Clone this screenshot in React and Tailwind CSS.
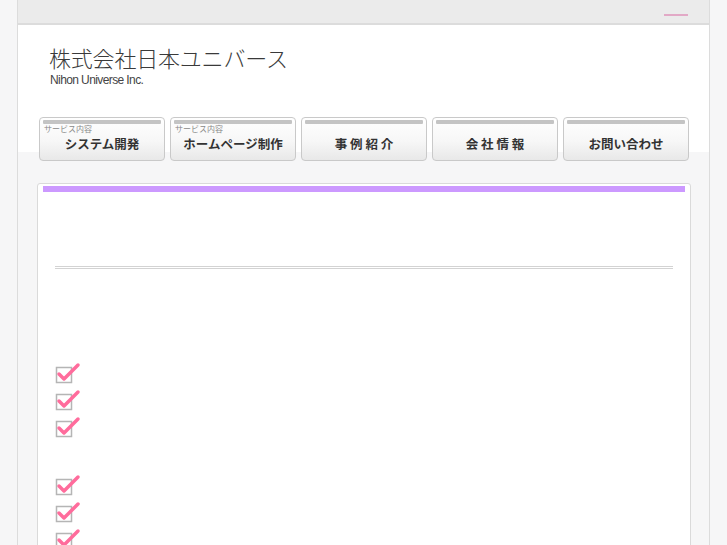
import React from "react";

const navItems = [
  { label: "システム開発", sub: "サービス内容" },
  { label: "ホームページ制作", sub: "サービス内容" },
  { label: "事 例 紹 介" },
  { label: "会 社 情 報" },
  { label: "お問い合わせ" },
];

const CheckMark = () => (
  <svg width="26" height="22" viewBox="0 0 26 22" className="block">
    <rect x="1.5" y="5.5" width="15" height="15" fill="#fff" stroke="#b5b5b5" strokeWidth="1.5" />
    <path d="M4 12 L9 17 L23 3" fill="none" stroke="#ff6c9c" strokeWidth="3.5" strokeLinecap="round" strokeLinejoin="round" />
  </svg>
);

const NavButton = ({ label, sub }) => (
  <div className="relative w-[126px] h-[44px] rounded-[4px] border border-[#c9c9c9] bg-[linear-gradient(to_bottom,#ffffff_0%,#f7f7f7_55%,#e8e8e8_100%)] px-[3px] pt-[2px]">
    <div className="h-[4px] bg-[#c4c4c4] rounded-[1px]" />
    {sub && (
      <div className="absolute left-[4px] top-[6px] text-[8px] leading-[9px] text-[#888]">{sub}</div>
    )}
    <div className="flex items-center justify-center h-[34px] pt-[4px] text-[12.5px] leading-[15px] font-bold text-[#333]">
      {label}
    </div>
  </div>
);

export default function App() {
  const groups = [[0, 1, 2], [3, 4, 5]];

  return (
    <div
      className="min-h-screen bg-[#f6f6f7] pl-[17px]"
      style={{ fontFamily: '"Noto Sans CJK JP", "Liberation Sans", sans-serif' }}
    >
      <div className="w-[693px] min-h-[545px] border-x border-[#dcdcdc]">
        {/* top band */}
        <div className="h-[25px] bg-[#ebebeb] border-b-2 border-[#dcdcdc] flex justify-end pr-[21px] pt-[14px]">
          <div className="w-[24px] h-[2px] bg-[#e2a9c6]" />
        </div>

        {/* logo */}
        <div className="bg-white h-[92px] pl-[31px] pt-[17px]">
          <div className="text-[22px] font-light leading-[30px] text-[#3a3a3a] tracking-[-0.2px]">株式会社日本ユニバース</div>
          <div
            className="text-[12px] leading-[14px] text-[#444] tracking-[-0.6px] mt-[1px] pl-[1px]"
            style={{ fontFamily: '"Liberation Sans", sans-serif' }}
          >
            Nihon Universe Inc.
          </div>
        </div>

        {/* nav */}
        <div className="flex gap-[5px] pl-[21px] h-[43px] bg-[linear-gradient(to_bottom,#ffffff_35px,#f6f6f7_35px)]">
          {navItems.map((item) => (
            <NavButton key={item.label} label={item.label} sub={item.sub} />
          ))}
        </div>

        {/* content */}
        <div className="pl-[19px] pt-[23px]">
          <div className="w-[654px] min-h-[400px] bg-white border border-[#dadada] rounded-[3px] px-[5px] pt-[2px]">
            <div className="h-[6px] bg-[#cc99ff]" />
            <div className="mx-[12px] mt-[74px] h-[3px] border-y border-[#d3d3d3]" />
            <div className="pl-[12px] pt-[93px] flex flex-col gap-[36px]">
              {groups.map((g, gi) => (
                <div key={gi} className="flex flex-col gap-[5px]">
                  {g.map((i) => (
                    <CheckMark key={i} />
                  ))}
                </div>
              ))}
            </div>
          </div>
        </div>
      </div>
    </div>
  );
}
